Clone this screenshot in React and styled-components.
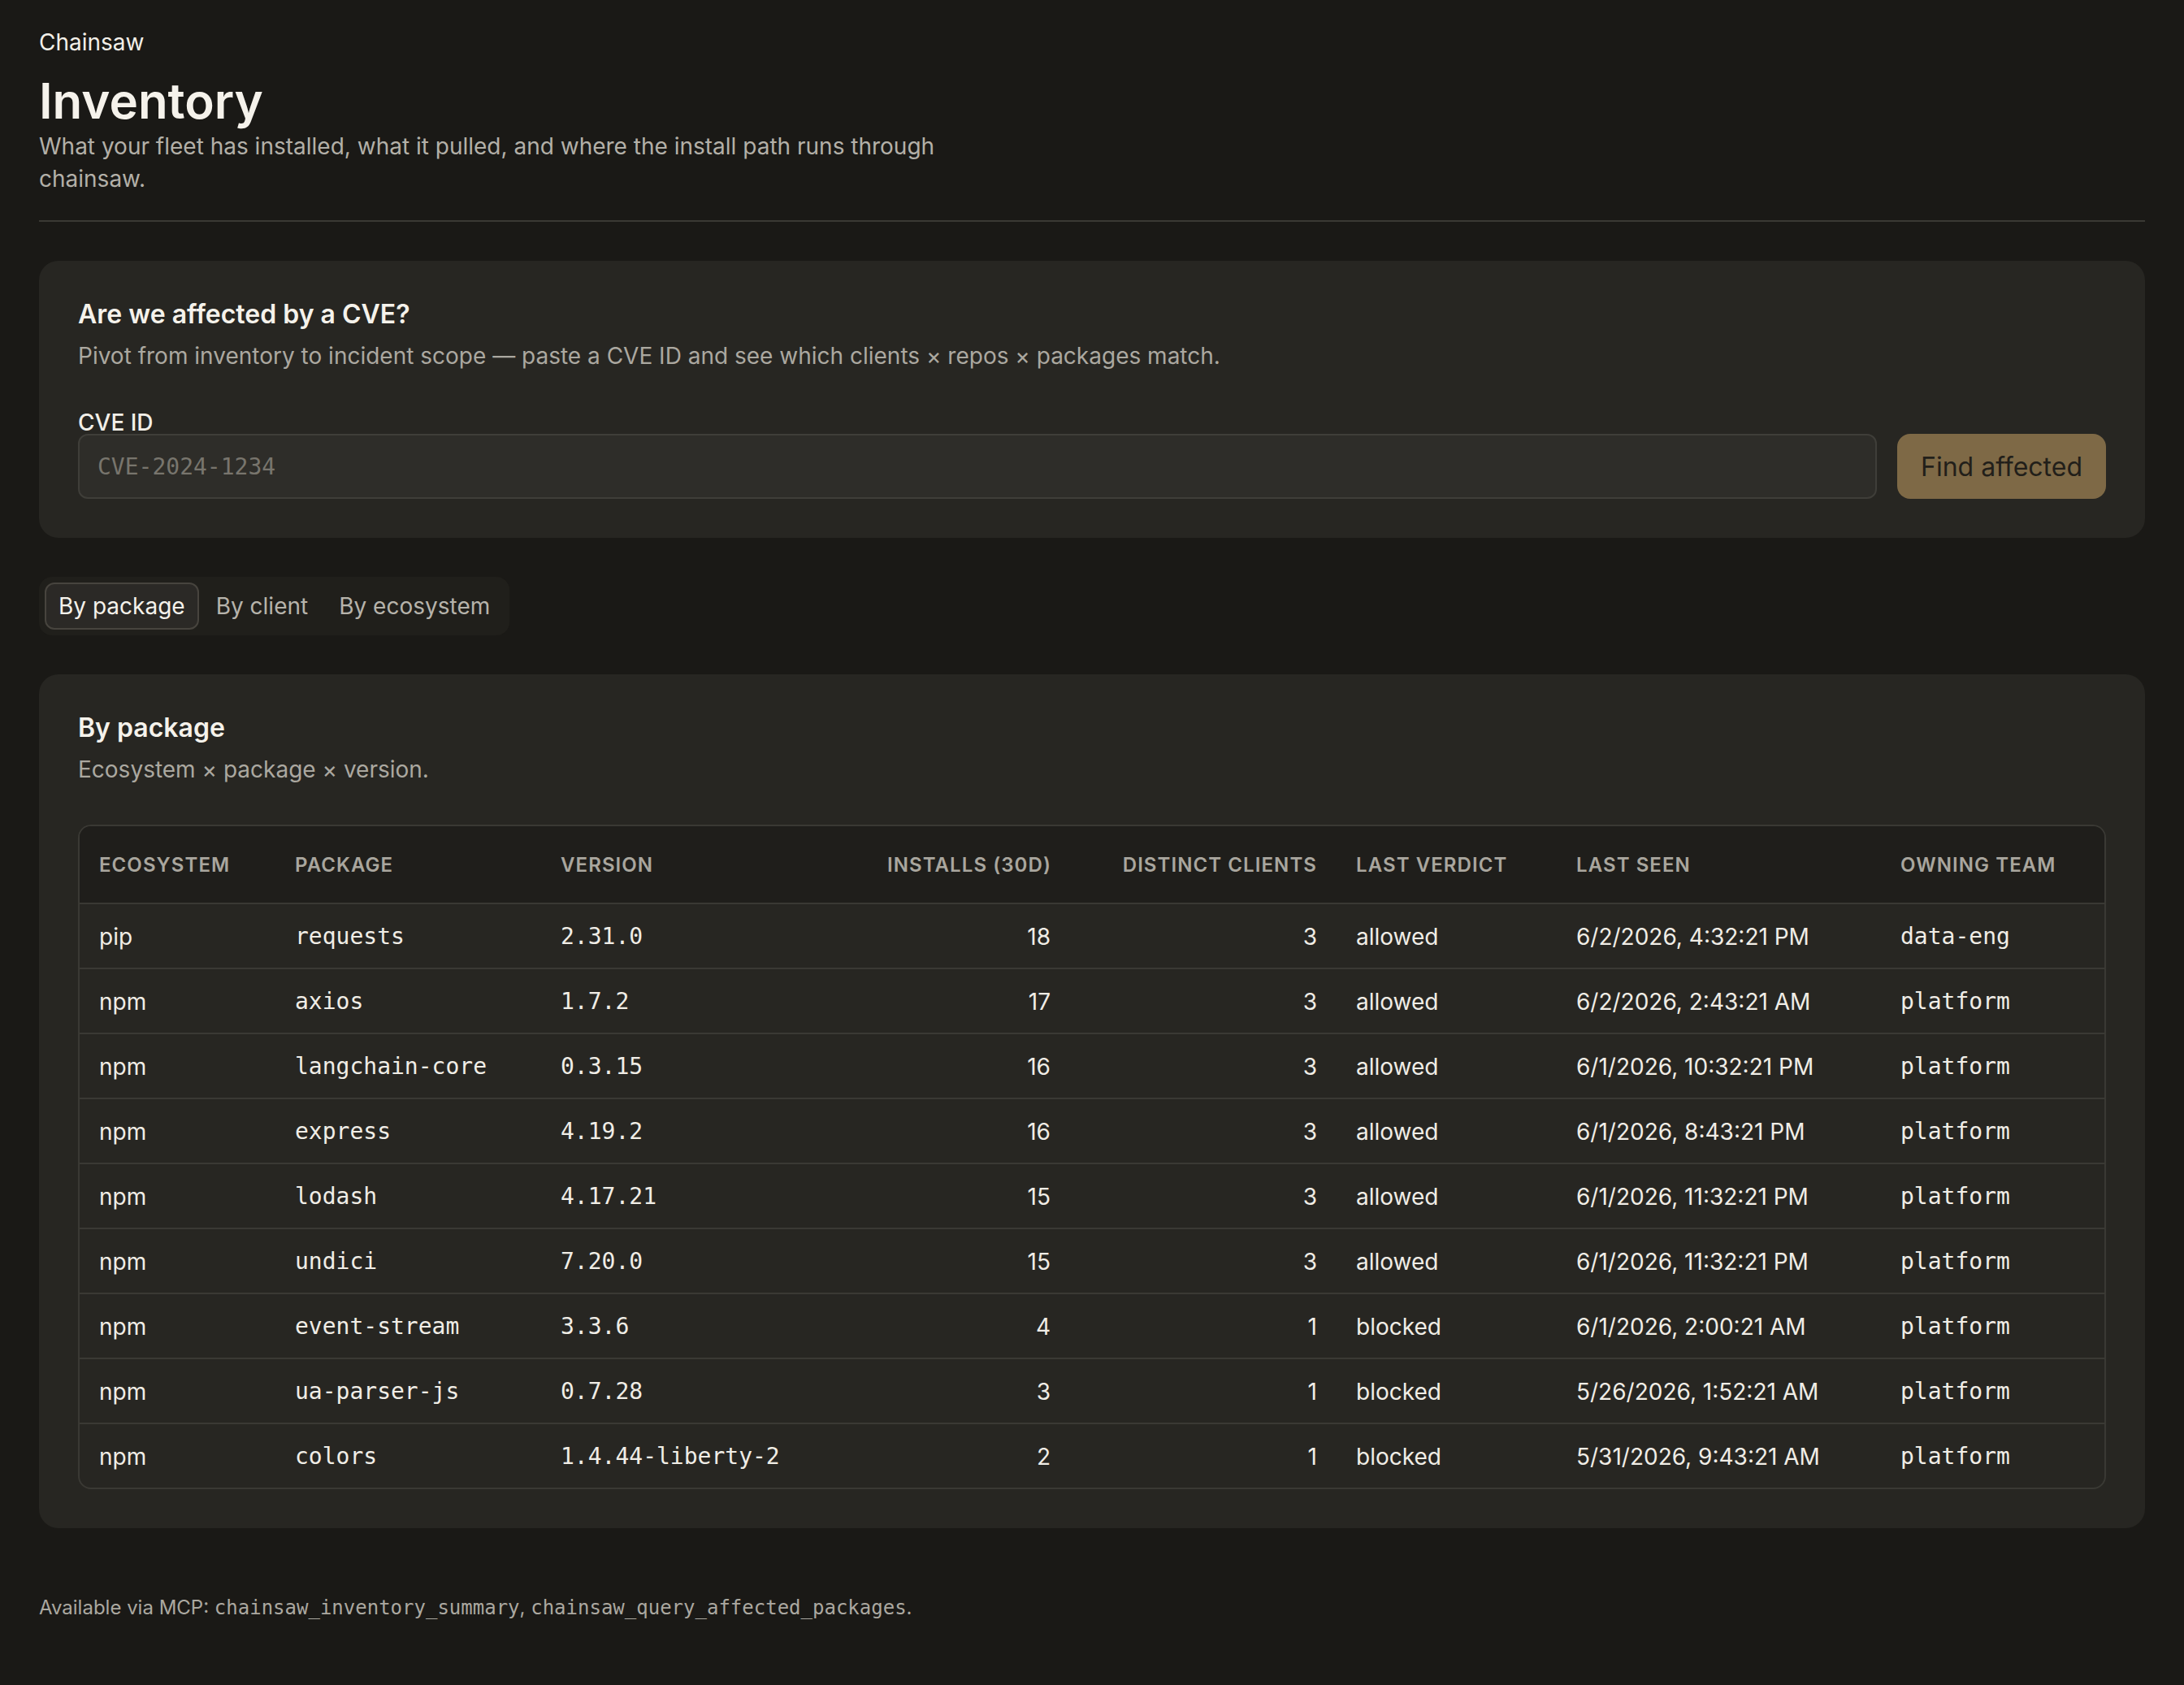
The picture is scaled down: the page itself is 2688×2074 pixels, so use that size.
import React from "react";
import styled, { createGlobalStyle } from "styled-components";

const GlobalStyle = createGlobalStyle`
  html, body {
    margin: 0;
    padding: 0;
    background: #1a1916;
    color: #f2efe8;
    font-family: Inter, "Noto Sans", "Liberation Sans", sans-serif;
  }
  * { box-sizing: border-box; }
`;

const rows = [
  { eco: "pip", pkg: "requests", ver: "2.31.0", installs: 18, clients: 3, verdict: "allowed", seen: "6/2/2026, 4:32:21 PM", team: "data-eng" },
  { eco: "npm", pkg: "axios", ver: "1.7.2", installs: 17, clients: 3, verdict: "allowed", seen: "6/2/2026, 2:43:21 AM", team: "platform" },
  { eco: "npm", pkg: "langchain-core", ver: "0.3.15", installs: 16, clients: 3, verdict: "allowed", seen: "6/1/2026, 10:32:21 PM", team: "platform" },
  { eco: "npm", pkg: "express", ver: "4.19.2", installs: 16, clients: 3, verdict: "allowed", seen: "6/1/2026, 8:43:21 PM", team: "platform" },
  { eco: "npm", pkg: "lodash", ver: "4.17.21", installs: 15, clients: 3, verdict: "allowed", seen: "6/1/2026, 11:32:21 PM", team: "platform" },
  { eco: "npm", pkg: "undici", ver: "7.20.0", installs: 15, clients: 3, verdict: "allowed", seen: "6/1/2026, 11:32:21 PM", team: "platform" },
  { eco: "npm", pkg: "event-stream", ver: "3.3.6", installs: 4, clients: 1, verdict: "blocked", seen: "6/1/2026, 2:00:21 AM", team: "platform" },
  { eco: "npm", pkg: "ua-parser-js", ver: "0.7.28", installs: 3, clients: 1, verdict: "blocked", seen: "5/26/2026, 1:52:21 AM", team: "platform" },
  { eco: "npm", pkg: "colors", ver: "1.4.44-liberty-2", installs: 2, clients: 1, verdict: "blocked", seen: "5/31/2026, 9:43:21 AM", team: "platform" },
];

const columns = [
  { label: "Ecosystem", width: 241 },
  { label: "Package", width: 327 },
  { label: "Version", width: 402 },
  { label: "Installs (30d)", width: 249, right: true },
  { label: "Distinct clients", width: 328, right: true },
  { label: "Last verdict", width: 271 },
  { label: "Last seen", width: 399 },
  { label: "Owning team" },
];

function App() {
  const [tab, setTab] = React.useState("package");

  return (
    <Page>
      <GlobalStyle />
      <Header>
        <Brand>Chainsaw</Brand>
        <Title>Inventory</Title>
        <Lead>
          What your fleet has installed, what it pulled, and where the install path runs through
          chainsaw.
        </Lead>
      </Header>

      <Card>
        <CardTitle>Are we affected by a CVE?</CardTitle>
        <CardSub>
          Pivot from inventory to incident scope — paste a CVE ID and see which clients × repos × packages match.
        </CardSub>
        <Form>
          <Label htmlFor="cve">CVE ID</Label>
          <InputRow>
            <Input id="cve" placeholder="CVE-2024-1234" />
            <Button>Find affected</Button>
          </InputRow>
        </Form>
      </Card>

      <Tabs>
        <Tab $active={tab === "package"} onClick={() => setTab("package")}>By package</Tab>
        <Tab $active={tab === "client"} onClick={() => setTab("client")}>By client</Tab>
        <Tab $active={tab === "ecosystem"} onClick={() => setTab("ecosystem")}>By ecosystem</Tab>
      </Tabs>

      <Card>
        <CardTitle>By package</CardTitle>
        <CardSub>Ecosystem × package × version.</CardSub>
        <TableWrap>
          <Table>
            <colgroup>
              {columns.map((c) => (
                <Col key={c.label} $width={c.width} />
              ))}
            </colgroup>
            <thead>
              <tr>
                {columns.map((c) => (
                  <Th key={c.label} $right={c.right}>{c.label}</Th>
                ))}
              </tr>
            </thead>
            <tbody>
              {rows.map((r) => (
                <Tr key={r.pkg}>
                  <Td>{r.eco}</Td>
                  <Td $mono>{r.pkg}</Td>
                  <Td $mono>{r.ver}</Td>
                  <Td $right>{r.installs}</Td>
                  <Td $right>{r.clients}</Td>
                  <Td>{r.verdict}</Td>
                  <Td>{r.seen}</Td>
                  <Td $mono>{r.team}</Td>
                </Tr>
              ))}
            </tbody>
          </Table>
        </TableWrap>
      </Card>

      <Footer>
        Available via MCP: <Code>chainsaw_inventory_summary</Code>, <Code>chainsaw_query_affected_packages</Code>.
      </Footer>
    </Page>
  );
}

const mono = `"DejaVu Sans Mono", "Liberation Mono", monospace`;

const Page = styled.div`
  display: flex;
  flex-direction: column;
  align-items: flex-start;
  gap: 48px;
  padding: 32px 48px 80px;
  min-height: 100vh;
  background: #1a1916;
`;

const Header = styled.header`
  align-self: stretch;
  padding-bottom: 31px;
  border-bottom: 2px solid #3a3934;
`;

const Brand = styled.div`
  font-size: 28px;
  line-height: 40px;
  color: #f2efe8;
`;

const Title = styled.h1`
  margin: 16px 0 0;
  font-size: 60px;
  line-height: 72px;
  font-weight: 600;
  color: #f5f2eb;
`;

const Lead = styled.p`
  margin: 0;
  max-width: 1200px;
  font-size: 28px;
  line-height: 40px;
  color: #b3b0a8;
`;

const Card = styled.section`
  align-self: stretch;
  padding: 47px 48px 48px;
  background: #272622;
  border-radius: 24px;
`;

const CardTitle = styled.h2`
  margin: 0;
  font-size: 32px;
  line-height: 38px;
  font-weight: 600;
  color: #f5f2eb;
`;

const CardSub = styled.p`
  margin: 12px 0 0;
  font-size: 28px;
  line-height: 40px;
  color: #aba8a0;
`;

const Form = styled.div`
  margin-top: 48px;
`;

const Label = styled.label`
  display: block;
  font-size: 28px;
  line-height: 28px;
  font-weight: 500;
  color: #f2efe8;
`;

const InputRow = styled.div`
  display: flex;
  gap: 25px;
  height: 80px;
`;

const Input = styled.input`
  flex: 1;
  padding: 0 22px;
  background: #2e2d29;
  border: 2px solid #3f3e39;
  border-radius: 12px;
  font-family: ${mono};
  font-size: 28px;
  color: #f2efe8;
  outline: none;

  &::placeholder {
    color: #78756d;
  }
`;

const Button = styled.button`
  width: 257px;
  padding: 0;
  background: #7e6946;
  border: none;
  border-radius: 16px;
  font-family: Inter, "Noto Sans", sans-serif;
  font-size: 32px;
  color: #221f1a;
  cursor: pointer;
`;

const Tabs = styled.div`
  display: inline-flex;
  gap: 4px;
  padding: 7px;
  background: #201f1b;
  border-radius: 16px;
`;

const Tab = styled.button`
  padding: 7px 15px;
  border: 2px solid ${(p) => (p.$active ? "#47443e" : "transparent")};
  border-radius: 12px;
  background: ${(p) => (p.$active ? "#2b2926" : "transparent")};
  font-family: Inter, "Noto Sans", sans-serif;
  font-size: 28px;
  line-height: 40px;
  color: ${(p) => (p.$active ? "#f5f2eb" : "#b6b3ab")};
  cursor: pointer;
`;

const TableWrap = styled.div`
  margin-top: 48px;
  border: 2px solid #3a3934;
  border-radius: 16px;
  overflow: hidden;
`;

const Table = styled.table`
  width: 100%;
  table-layout: fixed;
  border-collapse: separate;
  border-spacing: 0;
`;

const Col = styled.col`
  width: ${(p) => (p.$width ? `${p.$width}px` : "auto")};
`;

const Th = styled.th`
  padding: 30px 24px 28px;
  background: #1f1e1b;
  border-bottom: 2px solid #3a3934;
  text-align: ${(p) => (p.$right ? "right" : "left")};
  font-size: 24px;
  line-height: 36px;
  font-weight: 600;
  letter-spacing: 0.045em;
  text-transform: uppercase;
  color: #a9a69e;
  white-space: nowrap;
`;

const Tr = styled.tr`
  &:not(:last-child) td {
    border-bottom: 2px solid #3a3934;
  }
`;

const Td = styled.td`
  padding: 20px 24px 18px;
  text-align: ${(p) => (p.$right ? "right" : "left")};
  font-family: ${(p) => (p.$mono ? mono : `Inter, "Noto Sans", sans-serif`)};
  font-size: 28px;
  line-height: 40px;
  color: #f0ede6;
  white-space: nowrap;
`;

const Footer = styled.p`
  margin: 32px 0 0;
  font-size: 24px;
  line-height: 36px;
  color: #aba8a0;
`;

const Code = styled.code`
  font-family: ${mono};
  font-size: 24px;
`;

export default App;
